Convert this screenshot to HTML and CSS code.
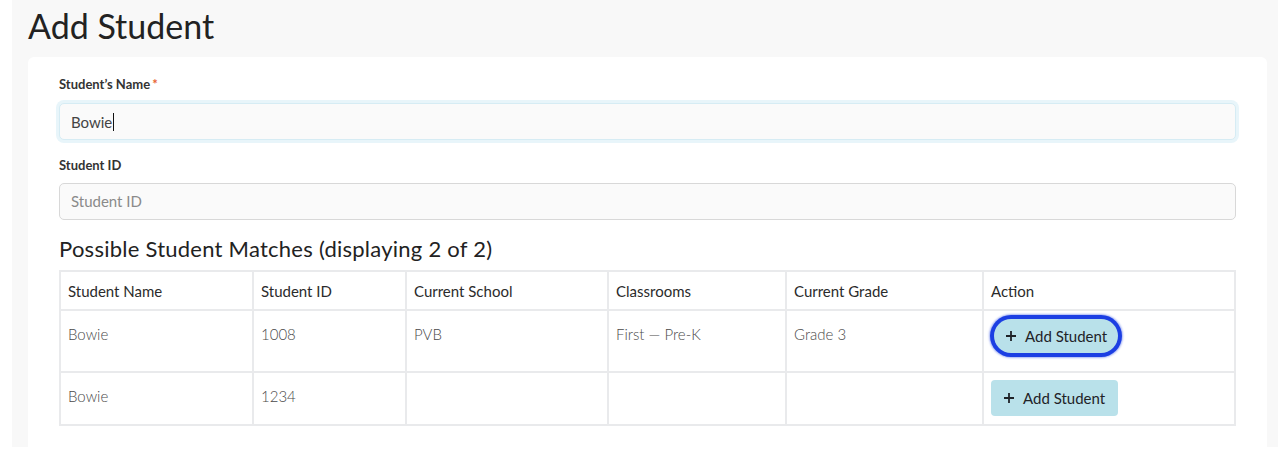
FILE: index.html
```html
<!DOCTYPE html>
<html lang="en">
<head>
  <meta charset="UTF-8">
  <title>Add Student</title>
  <link rel="stylesheet" href="styles.css">
</head>
<body>
  <div class="page">
    <h1 class="page-title">Add Student</h1>

    <div class="card">
      <label class="field-label">Student’s Name<span class="required">*</span></label>
      <div class="text-input is-focused">Bowie<span class="caret"></span></div>

      <label class="field-label second">Student ID</label>
      <div class="text-input placeholder">Student ID</div>

      <h2 class="matches-title">Possible Student Matches (displaying 2 of 2)</h2>

      <table class="matches">
        <colgroup>
          <col style="width: 193px">
          <col style="width: 153px">
          <col style="width: 202px">
          <col style="width: 178px">
          <col style="width: 197px">
          <col>
        </colgroup>
        <thead>
          <tr>
            <th>Student Name</th>
            <th>Student ID</th>
            <th>Current School</th>
            <th>Classrooms</th>
            <th>Current Grade</th>
            <th>Action</th>
          </tr>
        </thead>
        <tbody>
          <tr class="row-tall">
            <td>Bowie</td>
            <td>1008</td>
            <td>PVB</td>
            <td>First — Pre-K</td>
            <td>Grade 3</td>
            <td class="action-cell">
              <button class="add-btn focused">
                <svg width="12" height="12" viewBox="0 0 12 12"><path d="M6 1v10M1 6h10" stroke="#1f2328" stroke-width="1.8" fill="none"/></svg>
                Add Student
              </button>
            </td>
          </tr>
          <tr class="row-short">
            <td>Bowie</td>
            <td>1234</td>
            <td></td>
            <td></td>
            <td></td>
            <td class="action-cell">
              <button class="add-btn">
                <svg width="12" height="12" viewBox="0 0 12 12"><path d="M6 1v10M1 6h10" stroke="#1f2328" stroke-width="1.8" fill="none"/></svg>
                Add Student
              </button>
            </td>
          </tr>
        </tbody>
      </table>
    </div>
  </div>
</body>
</html>
```

FILE: styles.css
```css
* {
  box-sizing: border-box;
}

body {
  margin: 0;
  padding: 0;
  background: #ffffff;
  font-family: 'Lato', 'Open Sans', sans-serif;
  color: #333;
}

.page {
  margin-left: 12px;
  height: 447px;
  overflow: hidden;
  background: #f8f8f8;
  padding: 6px 11px 0 16px;
}

.page-title {
  margin: 0 0 10px;
  font-size: 34px;
  line-height: 1.2;
  font-weight: 400;
  color: #222;
}

.card {
  background: #fff;
  border-radius: 6px;
  padding: 20px 31px 40px 31px;
  height: 500px;
}

.field-label {
  display: block;
  font-size: 13px;
  line-height: 1.2;
  font-weight: 700;
  color: #333;
  margin-bottom: 11px;
}

.field-label.second {
  margin-top: 18px;
  margin-bottom: 9px;
}

.required {
  color: #e8622f;
  margin-left: 2px;
}

.text-input {
  height: 37px;
  border: 1px solid #d8d8d8;
  border-radius: 5px;
  background: #fafafa;
  padding: 0 11px;
  font-size: 15px;
  color: #444;
  display: flex;
  align-items: center;
}

.text-input.is-focused {
  border-color: #d6ecf4;
  box-shadow: 0 0 0 3px #e8f5fa;
}

.text-input.placeholder {
  color: #8a8a8a;
}

.caret {
  display: inline-block;
  width: 1px;
  height: 18px;
  background: #111;
  margin-left: 1px;
}

.matches-title {
  margin: 16px 0 8px;
  font-size: 22px;
  line-height: 1.2;
  font-weight: 400;
  letter-spacing: 0.25px;
  color: #222;
}

.matches {
  width: 100%;
  table-layout: fixed;
  border-collapse: collapse;
  font-size: 15px;
}

.matches th,
.matches td {
  border: 2px solid #e9eaec;
  text-align: left;
  padding: 0 7px;
}

.matches th {
  height: 39px;
  font-weight: 400;
  color: #2b2b2b;
}

.matches td {
  vertical-align: top;
  padding-top: 14px;
  font-weight: 300;
  color: #4a4a4a;
}

.row-tall td {
  height: 62px;
}

.row-short td {
  height: 53px;
}

.matches td.action-cell {
  padding-top: 7px;
}

.add-btn {
  display: inline-flex;
  align-items: center;
  gap: 8px;
  height: 36px;
  padding: 0 13px 0 12px;
  border: none;
  border-radius: 4px;
  background: #b9e1ea;
  font-family: 'Lato', sans-serif;
  font-size: 15px;
  color: #1f2328;
  cursor: pointer;
}

.add-btn.focused {
  height: 34px;
  margin: 1px 0 0 3px;
  padding: 0 11px;
  border-radius: 18px;
  box-shadow: 0 0 0 4px #1c3fe3, 0 0 2px 5px rgba(28, 63, 227, 0.4);
}
```
